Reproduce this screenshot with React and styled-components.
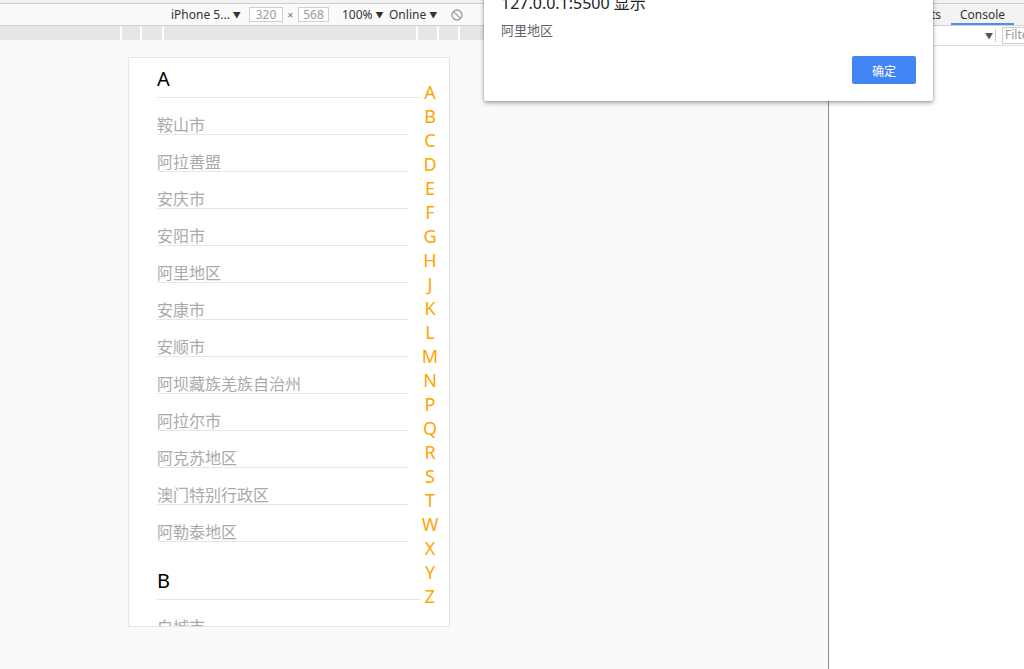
import React from 'react';
import styled, { createGlobalStyle } from 'styled-components';

const GlobalStyle = createGlobalStyle`
  html, body {
    margin: 0;
    padding: 0;
    height: 100%;
    overflow: hidden;
  }
  body {
    font-family: "Noto Sans", "Noto Sans CJK SC", sans-serif;
    background: #fafafa;
  }
`;

const Screen = styled.div`
  position: relative;
  width: 1024px;
  height: 669px;
  display: flex;
  flex-direction: column;
  overflow: hidden;
`;

const TopStrip = styled.div`
  height: 3px;
  background: #f2f2f2;
  border-bottom: 1px solid #cfcfcf;
`;

const Main = styled.div`
  flex: 1;
  display: flex;
  min-height: 0;
`;

const LeftPane = styled.div`
  flex: none;
  width: 828px;
  display: flex;
  flex-direction: column;
  border-right: 1px solid #8c8c8c;
`;

const DeviceBar = styled.div`
  height: 21px;
  display: flex;
  align-items: center;
  padding-left: 171px;
  background: #fafafa;
  border-bottom: 1px solid #d0d0d0;
  font-size: 12px;
  color: #333;
`;

const BarItem = styled.div`
  width: ${p => p.$w}px;
  margin-left: ${p => p.$ml || 0}px;
  margin-right: ${p => p.$mr || 0}px;
  white-space: nowrap;
  display: flex;
  align-items: center;
  gap: 3px;
`;

const Caret = styled.span`
  font-size: 8px;
  color: #333;
`;

const SizeBox = styled.div`
  width: ${p => p.$w || 34}px;
  height: 15px;
  box-sizing: border-box;
  border: 1px solid #cfcfcf;
  background: #fff;
  color: #9a9a9a;
  font-size: 12px;
  line-height: 13px;
  text-align: center;
`;

const Times = styled.span`
  width: 15px;
  text-align: center;
  color: #777;
  font-size: 11px;
`;

const Ruler = styled.div`
  height: 14px;
  display: flex;
  background: #fff;
`;

const RulerSeg = styled.div`
  width: ${p => (p.$w ? `${p.$w}px` : 'auto')};
  flex: ${p => (p.$w ? 'none' : 1)};
  margin-right: 2px;
  background: #e6e6e6;
`;

const Viewport = styled.div`
  flex: 1;
  background: #fafafa;
  padding: 17px 0 0 128px;
`;

const Phone = styled.div`
  position: relative;
  width: 320px;
  height: 568px;
  background: #fff;
  border: 1px solid #e4e4e4;
  overflow: hidden;
`;

const List = styled.div`
  padding: 0 28px;
`;

const Section = styled.div`
  & + & {
    margin-top: 18px;
  }
`;

const SectionHead = styled.div`
  padding: 9px 0 6px;
  line-height: 24px;
  font-size: 20px;
  color: #000;
  border-bottom: 1px solid #e6e6e6;
`;

const City = styled.div`
  margin-right: 12px;
  padding-top: 16px;
  line-height: 20px;
  font-size: 16px;
  color: #aaa;
  border-bottom: 1px solid #e6e6e6;
  font-family: "Noto Sans CJK SC", sans-serif;
`;

const IndexBar = styled.div`
  position: absolute;
  top: 22px;
  right: 9px;
  width: 20px;
  display: flex;
  flex-direction: column;
  align-items: center;
`;

const IndexLetter = styled.div`
  line-height: 24px;
  font-size: 18px;
  color: #ffa500;
`;

const DevPane = styled.div`
  flex: 1;
  min-width: 0;
  background: #fff;
  display: flex;
  flex-direction: column;
`;

const TabRow = styled.div`
  height: 21px;
  display: flex;
  padding-left: 50px;
  background: #f3f3f3;
  border-bottom: 1px solid #d0d0d0;
`;

const Tab = styled.div`
  width: ${p => p.$w}px;
  flex: none;
  text-align: ${p => p.$align || 'center'};
  padding-right: ${p => p.$pr || 0}px;
  box-sizing: border-box;
  font-size: 12px;
  line-height: 21px;
  color: #333;
  white-space: nowrap;
  border-bottom: ${p => (p.$active ? '2px solid #4d8ef0' : 'none')};
  height: 21px;
`;

const FilterRow = styled.div`
  height: 19px;
  display: flex;
  align-items: center;
  padding-left: 156px;
  border-bottom: 1px solid #dedede;
`;

const SmallCaret = styled.span`
  font-size: 8px;
  color: #555;
  width: 10px;
`;

const Divider = styled.div`
  width: 1px;
  height: 13px;
  background: #ccc;
  margin: 0 6px 0 0;
`;

const FilterBox = styled.div`
  flex: 1;
  height: 15px;
  border: 1px solid #ccc;
  border-right: none;
  font-size: 12px;
  line-height: 14px;
  color: #999;
  padding-left: 2px;
  white-space: nowrap;
  overflow: hidden;
`;

const Dialog = styled.div`
  position: absolute;
  left: 484px;
  top: -20px;
  width: 449px;
  box-sizing: border-box;
  padding: 13px 17px 17px;
  background: #fff;
  border-radius: 2px;
  box-shadow: 0 2px 5px rgba(0, 0, 0, 0.35), 0 0 0 1px rgba(0, 0, 0, 0.08);
  display: flex;
  flex-direction: column;
`;

const DialogTitle = styled.div`
  font-size: 16px;
  line-height: 20px;
  color: #202124;
  font-family: "Noto Sans", "Noto Sans CJK SC", sans-serif;
`;

const DialogMessage = styled.div`
  margin-top: 8px;
  font-size: 13px;
  line-height: 18px;
  color: #5f6368;
  font-family: "Noto Sans CJK SC", sans-serif;
`;

const DialogActions = styled.div`
  margin-top: 17px;
  display: flex;
  justify-content: flex-end;
`;

const OkButton = styled.button`
  width: 64px;
  height: 28px;
  border: none;
  border-radius: 2px;
  background: #4285f4;
  color: #fff;
  font-size: 12px;
  font-family: "Noto Sans CJK SC", sans-serif;
  padding: 0;
`;

const BlockIcon = () => (
  <svg width="12" height="12" viewBox="0 0 12 12">
    <circle cx="6" cy="6" r="5" fill="none" stroke="#9a9a9a" strokeWidth="1.3" />
    <line x1="2.6" y1="2.6" x2="9.4" y2="9.4" stroke="#9a9a9a" strokeWidth="1.3" />
  </svg>
);

const sections = [
  {
    letter: 'A',
    cities: ['鞍山市', '阿拉善盟', '安庆市', '安阳市', '阿里地区', '安康市', '安顺市',
      '阿坝藏族羌族自治州', '阿拉尔市', '阿克苏地区', '澳门特别行政区', '阿勒泰地区'],
  },
  {
    letter: 'B',
    cities: ['白城市'],
  },
];

const letters = 'ABCDEFGHJKLMNPQRSTWXYZ'.split('');

export default function App() {
  return (
    <>
      <GlobalStyle />
      <Screen>
        <TopStrip />
        <Main>
          <LeftPane>
            <DeviceBar>
              <BarItem $w={64} $mr={14}>iPhone 5... <Caret>▼</Caret></BarItem>
              <SizeBox>320</SizeBox>
              <Times>×</Times>
              <SizeBox $w={31}>568</SizeBox>
              <BarItem $w={40} $ml={13} $mr={7}>100% <Caret>▼</Caret></BarItem>
              <BarItem $w={46} $mr={16}>Online <Caret>▼</Caret></BarItem>
              <BlockIcon />
            </DeviceBar>
            <Ruler>
              <RulerSeg $w={120} />
              <RulerSeg $w={18} />
              <RulerSeg $w={20} />
              <RulerSeg $w={252} />
              <RulerSeg $w={19} />
              <RulerSeg $w={19} />
              <RulerSeg />
            </Ruler>
            <Viewport>
              <Phone>
                <List>
                  {sections.map(s => (
                    <Section key={s.letter}>
                      <SectionHead>{s.letter}</SectionHead>
                      {s.cities.map(c => (
                        <City key={c}>{c}</City>
                      ))}
                    </Section>
                  ))}
                </List>
                <IndexBar>
                  {letters.map(l => (
                    <IndexLetter key={l}>{l}</IndexLetter>
                  ))}
                </IndexBar>
              </Phone>
            </Viewport>
          </LeftPane>
          <DevPane>
            <TabRow>
              <Tab $w={72} $align="right" $pr={10}>Elements</Tab>
              <Tab $w={63} $active>Console</Tab>
            </TabRow>
            <FilterRow>
              <SmallCaret>▼</SmallCaret>
              <Divider />
              <FilterBox>Filter</FilterBox>
            </FilterRow>
          </DevPane>
        </Main>
        <Dialog>
          <DialogTitle>127.0.0.1:5500 显示</DialogTitle>
          <DialogMessage>阿里地区</DialogMessage>
          <DialogActions>
            <OkButton>确定</OkButton>
          </DialogActions>
        </Dialog>
      </Screen>
    </>
  );
}
